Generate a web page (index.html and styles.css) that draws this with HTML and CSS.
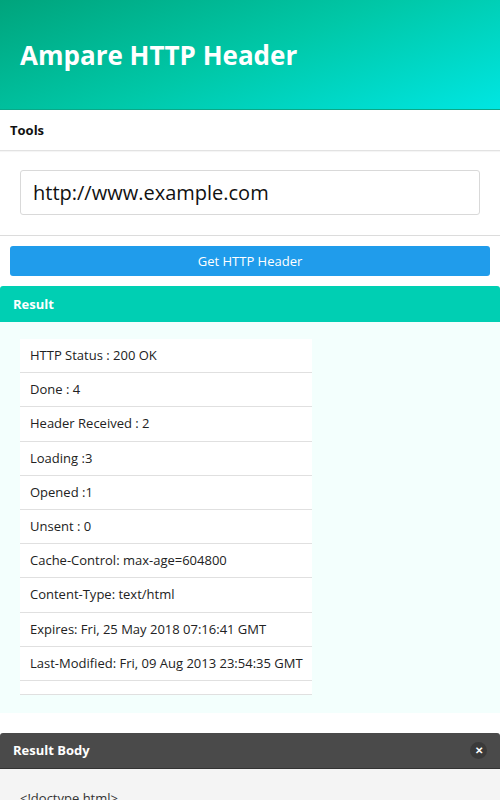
FILE: index.html
```html
<!DOCTYPE html>
<html lang="en">
<head>
<meta charset="utf-8">
<title>Ampare HTTP Header</title>
<link rel="stylesheet" href="styles.css">
</head>
<body>
<header class="app-header">
  <h1 class="app-title">Ampare HTTP Header</h1>
</header>
<div class="tools-bar">Tools</div>
<div class="input-wrap">
  <input class="url-input" type="text" value="http://www.example.com">
</div>
<div class="btn-wrap">
  <button class="get-btn" type="button">Get HTTP Header</button>
</div>
<section class="result">
  <div class="result-head">Result</div>
  <div class="result-body">
    <ul class="result-list">
      <li>HTTP Status : 200 OK</li>
      <li>Done : 4</li>
      <li>Header Received : 2</li>
      <li>Loading :3</li>
      <li>Opened :1</li>
      <li>Unsent : 0</li>
      <li>Cache-Control: max-age=604800</li>
      <li>Content-Type: text/html</li>
      <li>Expires: Fri, 25 May 2018 07:16:41 GMT</li>
      <li>Last-Modified: Fri, 09 Aug 2013 23:54:35 GMT</li>
      <li class="empty"></li>
    </ul>
  </div>
</section>
<section class="body-panel">
  <div class="body-head">
    <span>Result Body</span>
    <span class="close-btn">&#x2715;</span>
  </div>
  <div class="body-content">&lt;!doctype html&gt;</div>
</section>
</body>
</html>
```
FILE: styles.css
```css
html, body {
  margin: 0;
  padding: 0;
}
body {
  font-family: "Open Sans", "Noto Sans", sans-serif;
  font-size: 13px;
  color: #222;
  background: #fff;
}
.app-header {
  height: 109px;
  display: flex;
  align-items: center;
  padding: 0 20px;
  background: linear-gradient(160deg, #00a47c 0%, #00c8a8 50%, #00e6e2 100%);
  border-bottom: 1px solid #0aa888;
}
.app-title {
  margin: 0;
  color: #fff;
  font-size: 26px;
  font-weight: 700;
}
.tools-bar {
  height: 40px;
  display: flex;
  align-items: center;
  padding: 0 10px;
  font-weight: 700;
  color: #111;
  border-bottom: 1px solid #e2e2e2;
  box-shadow: 0 1px 1px rgba(0,0,0,0.04);
}
.input-wrap {
  padding: 19px 20px 20px;
  border-bottom: 1px solid #dcdcdc;
}
.url-input {
  display: block;
  box-sizing: border-box;
  width: 100%;
  height: 45px;
  border: 1px solid #d9d9d9;
  border-radius: 3px;
  padding: 0 12px;
  font-family: inherit;
  font-size: 20px;
  color: #111;
  background: #fff;
  outline: none;
}
.btn-wrap {
  padding: 10px 10px;
}
.get-btn {
  display: block;
  width: 100%;
  height: 30px;
  border: 0;
  border-radius: 3px;
  background: #209ceb;
  color: #fff;
  font-family: inherit;
  font-size: 13px;
}
.result-head {
  height: 36px;
  display: flex;
  align-items: center;
  padding: 0 13px;
  background: #00cfb3;
  color: #fff;
  font-weight: 700;
  border-radius: 3px 3px 0 0;
}
.result-body {
  background: #f3fffd;
  padding: 17px 20px 18px;
}
.result-list {
  list-style: none;
  margin: 0;
  padding: 0;
  width: 292px;
  background: #fff;
}
.result-list li {
  padding: 10px 10px;
  line-height: 13px;
  height: 13.2px;
  border-bottom: 1px solid #e0e0e0;
  white-space: nowrap;
}
.result-list li.empty {
  height: 13px;
  padding: 0;
}
.body-panel {
  margin-top: 20px;
}
.body-head {
  height: 35px;
  display: flex;
  align-items: center;
  justify-content: space-between;
  padding: 0 13px;
  background: #4a4a4a;
  border-bottom: 1px solid #333;
  border-radius: 3px 3px 0 0;
  color: #fff;
  font-weight: 700;
}
.close-btn {
  width: 17px;
  height: 17px;
  border-radius: 50%;
  background: #3a3a3a;
  display: flex;
  align-items: center;
  justify-content: center;
  font-size: 10px;
  font-weight: 700;
  margin-right: 0;
}
.body-content {
  background: #f4f4f4;
  padding: 20px 20px;
  color: #333;
}
```
